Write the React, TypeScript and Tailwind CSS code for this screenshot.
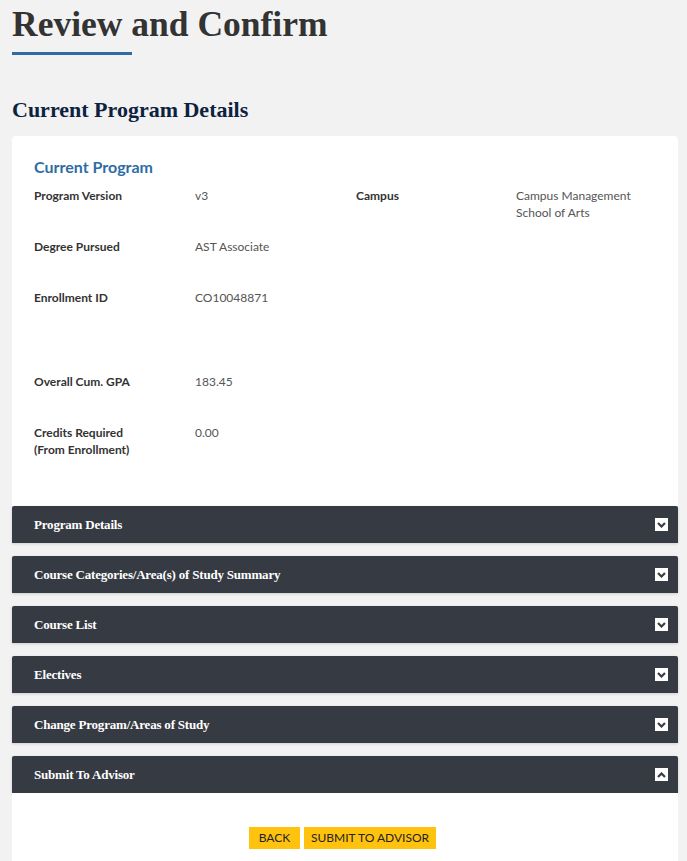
import React from "react";

const serif = { fontFamily: '"Liberation Serif", "DejaVu Serif", serif' };
const sans = { fontFamily: 'Lato, "Noto Sans", sans-serif' };

interface Field {
  label: React.ReactNode;
  value: React.ReactNode;
  label2?: React.ReactNode;
  value2?: React.ReactNode;
}

const rows: (Field | null)[] = [
  {
    label: "Program Version",
    value: "v3",
    label2: "Campus",
    value2: (
      <>
        Campus Management
        <br />
        School of Arts
      </>
    ),
  },
  { label: "Degree Pursued", value: "AST Associate" },
  { label: "Enrollment ID", value: "CO10048871" },
  null,
  { label: "Overall Cum. GPA", value: "183.45" },
  {
    label: (
      <>
        Credits Required
        <br />
        (From Enrollment)
      </>
    ),
    value: "0.00",
  },
];

const sections = [
  "Program Details",
  "Course Categories/Area(s) of Study Summary",
  "Course List",
  "Electives",
  "Change Program/Areas of Study",
];

const Chevron = ({ up }: { up?: boolean }) => (
  <span className="flex h-[13px] w-[13px] items-center justify-center bg-white">
    <svg width="9" height="6" viewBox="0 0 9 6">
      <polyline
        points={up ? "1,5 4.5,1.5 8,5" : "1,1 4.5,4.5 8,1"}
        fill="none"
        stroke="#3a3d44"
        strokeWidth="2.2"
      />
    </svg>
  </span>
);

const SectionHeader = ({ title, open }: { title: string; open?: boolean }) => (
  <div className="flex h-[37px] items-center justify-between rounded-t-[2px] bg-[#363a42] pl-[22px] pr-[10px] shadow-[0_1px_3px_rgba(0,0,0,0.15)]">
    <span className="text-[13px] font-bold tracking-[-0.2px] text-white" style={serif}>
      {title}
    </span>
    <Chevron up={open} />
  </div>
);

export default function App() {
  return (
    <div className="min-h-screen bg-[#f2f2f2] pl-3 pr-[9px] pt-[2px]" style={sans}>
      <h1 className="text-[35.5px] font-bold leading-[44px] text-[#333333]" style={serif}>
        Review and Confirm
      </h1>
      <div className="mt-[6px] h-[3px] w-[120px] bg-[#2e6da4]" />
      <h2 className="mt-[41px] text-[22px] font-bold leading-[28px] text-[#0d2240]" style={serif}>
        Current Program Details
      </h2>

      <div className="mt-[12px] rounded-t-[4px] bg-white px-[22px] pb-[31px] pt-[21px]">
        <h3 className="text-[16px] font-bold leading-[20px] text-[#2e6da4]">Current Program</h3>
        <div className="mt-[10px]">
          {rows.map((r, i) =>
            r === null ? (
              <div key={i} className="h-[33px]" />
            ) : (
              <div
                key={i}
                className="grid h-[51px] grid-cols-[161px_161px_160px_1fr] text-[12px] leading-[17px]"
              >
                <div className="font-bold text-[#333333]">{r.label}</div>
                <div className="text-[#555555]">{r.value}</div>
                <div className="font-bold text-[#333333]">{r.label2}</div>
                <div className="text-[#555555]">{r.value2}</div>
              </div>
            )
          )}
        </div>
      </div>

      <div className="flex flex-col gap-[13px]">
        {sections.map((s) => (
          <SectionHeader key={s} title={s} />
        ))}
        <div>
          <SectionHeader title="Submit To Advisor" open />
          <div className="flex justify-center gap-[4px] bg-white pb-[40px] pr-[5px] pt-[34px]">
            <button className="h-[22px] w-[51px] bg-[#ffc20e] text-[12px] text-[#222222]">BACK</button>
            <button className="h-[22px] w-[132px] bg-[#ffc20e] text-[12px] text-[#222222]">
              SUBMIT TO ADVISOR
            </button>
          </div>
        </div>
      </div>
    </div>
  );
}
